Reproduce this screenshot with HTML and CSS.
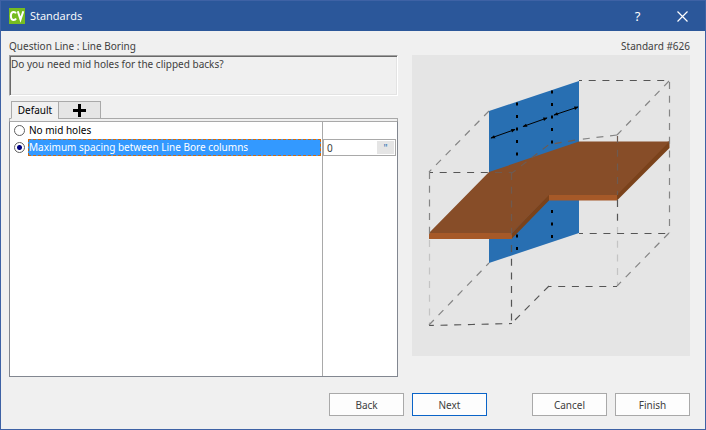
FILE: index.html
```html
<!DOCTYPE html>
<html lang="en">
<head>
<meta charset="utf-8">
<title>Standards</title>
<link rel="stylesheet" href="styles.css">
</head>
<body>
<div class="window">
  <header class="titlebar">
    <svg class="logo" viewBox="0 0 16 16" aria-hidden="true"><rect width="16" height="16" fill="#76bc21"/><path d="M7 5.400C6.400 4.200 5.600 3.900 4.700 3.900C2.900 3.900 1.900 5.300 1.900 8C1.900 10.700 2.900 12 4.700 12C5.700 12 6.500 11.600 7 10.500M8.800 3.300L11.500 11.500L14.300 3.300" fill="none" stroke="#fff" stroke-width="2"/></svg>
    <h1 class="title">Standards</h1>
    <button class="title-button" type="button" aria-label="Help">?</button>
    <button class="title-button" type="button" aria-label="Close"><svg class="close" viewBox="0 0 11 11"><path d="M.5 .5L10.500 10.500M10.500 .5L.5 10.500" stroke="#fff" stroke-width="1.2"/></svg></button>
  </header>
  <main class="content">
    <section class="question">
      <label class="caption" for="question">Question Line : Line Boring</label>
      <textarea class="question-text" id="question" readonly>Do you need mid holes for the clipped backs?</textarea>
      <nav class="tabs">
        <button class="tab active" type="button">Default</button>
        <button class="tab add" type="button" aria-label="Add"><svg class="plus" viewBox="0 0 13 13"><path d="M6.500 0V13M0 6.500H13" stroke="#000" stroke-width="3"/></svg></button>
      </nav>
      <div class="tab-edge"></div>
      <div class="options">
        <div class="choices">
          <div class="row"><input class="radio" type="radio" name="holes" id="none"><label class="choice" for="none">No mid holes</label></div>
          <div class="row"><input class="radio" type="radio" name="holes" id="spacing" checked><label class="choice selected" for="spacing">Maximum spacing between Line Bore columns</label></div>
        </div>
        <div class="values">
          <div class="field">
            <input class="value" type="text" value="0" aria-label="Maximum spacing">
            <button class="unit" type="button">"</button>
          </div>
        </div>
      </div>
    </section>
    <section class="preview">
      <p class="caption right">Standard #626</p>
      <svg class="drawing" viewBox="412 55 278 301" role="img" aria-label="Corner shelf with a drilled back panel">
        <rect x="412" y="55" width="278" height="301" fill="#e5e5e5"/>
        <path d="M489 111L579 81V233L489 263Z" fill="#286fb2"/>
        <path d="M512 233L549 194V200.500L512 238.500ZM616 195L668 141.500H669.500V148L617 200.500Z" fill="#7a421b"/>
        <path d="M489 172L579 141.500H669.500L617 195H549L512 233H429Z" fill="#874d28"/>
        <path d="M429 233H512V239H429ZM549 195H617V200.500H549Z" fill="#a65928"/>
        <g stroke="#000" stroke-width="2" stroke-dasharray="3 9.500">
          <path d="M517 102.500V157M517 234.500V250M552 90.500V144M552 210V238"/>
        </g>
        <g stroke="#000" fill="#000">
          <path d="M491 138L515 129.500M523 126.500L547 118M554 115L578 107"/>
          <path stroke="none" d="M490.500 138.300L494 135.200L495.500 138.300ZM515.500 129.300L511 129L512 132.500ZM522.500 126.700L526 123.700L527.500 126.800ZM547.500 117.800L543 117.500L544 121ZM553.500 115.300L557 112.200L558.500 115.300ZM578.500 106.800L574 106.500L575 110Z"/>
        </g>
        <g class="guides">
          <path class="soft" d="M489 111L429 172"/>
          <path d="M579 80.500H669" stroke-dashoffset="4"/>
          <path class="soft" d="M669.500 82V233"/>
          <path class="soft" d="M669 81L617 135"/>
          <path class="soft" d="M617 135L579 139.500"/>
          <path class="hidden" d="M579 139.500L549 144.500L512 173" stroke-dashoffset="-4"/>
          <path d="M429 172.500H489" stroke-dashoffset="3"/>
          <path class="hidden" d="M489 172.500H512" stroke-dashoffset="-6"/>
          <path class="soft" d="M429.500 172V240"/>
          <path class="faint" d="M429.500 240V325"/>
          <path d="M511.500 240V323" stroke-dashoffset="-5"/>
          <path class="hidden" d="M511.500 173V240M617.500 136V195"/>
          <path d="M617.500 200V225"/>
          <path class="faint" d="M617.500 227V286"/>
          <path d="M579 233.500H669" stroke-dashoffset="3"/>
          <path class="soft" d="M669 233L617 286"/>
          <path d="M617 286.500H549" stroke-dashoffset="3"/>
          <path d="M549 286L512 323"/>
          <path d="M512 323.500L472 324.500L429 325.500" stroke-dashoffset="4"/>
          <path class="soft" d="M429 325L489 263"/>
        </g>
      </svg>
    </section>
  </main>
  <footer class="actions">
    <button class="button" type="button">Back</button>
    <button class="button primary" type="button">Next</button>
    <button class="button cancel" type="button">Cancel</button>
    <button class="button" type="button">Finish</button>
  </footer>
</div>
</body>
</html>
```
FILE: styles.css
```css
* { box-sizing: border-box; }

body { margin: 0; }

body, button, input, textarea {
  font-family: "Noto Sans", "Open Sans", sans-serif;
  font-size: 10px;
  line-height: 16px;
  color: #404040;
}

button, input, textarea { margin: 0; padding: 0; border-radius: 0; }

.window {
  display: flex;
  flex-direction: column;
  min-height: 100vh;
  border: 1px solid #3e62a5;
  background: #f0f0f0;
}

.titlebar {
  display: flex;
  align-items: center;
  height: 30px;
  padding-left: 8px;
  background: #2b579a;
}

.logo { width: 16px; height: 16px; }

.title {
  flex: 1;
  margin: 0 0 0 5px;
  font: 400 11px/16px "Open Sans", sans-serif;
  color: #fff;
}

.title-button {
  width: 45px;
  height: 30px;
  border: 0;
  background: none;
  font-size: 13px;
  color: #fff;
}

.close { display: block; width: 11px; height: 11px; margin: auto; }

.content {
  display: grid;
  grid-template-columns: 389fr 278fr;
  gap: 14px;
  padding: 7px 15px 0 8px;
}

.question { display: flex; flex-direction: column; }

.caption { display: block; margin: 0; height: 17px; }
.right { text-align: right; }

.question-text {
  display: block;
  width: 100%;
  height: 41px;
  padding: 0 1px;
  border: 1px solid;
  border-color: #a0a0a0 #fff #fff #a0a0a0;
  background: #f0f0f0;
  box-shadow: inset 1px 1px #696969, inset -1px -1px #e3e3e3;
  resize: none;
  outline: 0;
}

.tabs { display: flex; margin: 5px 0 -1px 2px; z-index: 1; }

.tab {
  width: 48px;
  height: 18px;
  border: 1px solid #a9a9a9;
  border-bottom-color: #f0f0f0;
  background: #f0f0f0;
  color: #000;
}

.add {
  width: 43px;
  margin-left: -1px;
  border-bottom-color: #a9a9a9;
  background: #e5e5e5;
}

.plus { display: block; width: 13px; height: 13px; margin: auto; }

.tab-edge {
  height: 3px;
  border: 1px solid #a9a9a9;
  border-bottom: 0;
}

.options {
  display: flex;
  flex: 1;
  min-height: 256px;
  border: 1px solid #828790;
  border-top-color: #a9a9a9;
  background: #fff;
}

.choices { flex: 1; padding: 0 1px 0 4px; }

.row { display: flex; align-items: center; height: 17px; }

.radio {
  appearance: none;
  width: 11px;
  height: 11px;
  border: 1px solid #606060;
  border-radius: 50%;
  background: #fff;
}

.radio:checked { background: radial-gradient(circle, #000080 0 2px, #fff 3px); }

.choice {
  flex: 1;
  margin-left: 3px;
  border: 1px solid transparent;
  line-height: 15px;
  color: #000;
}

.selected {
  border: 1px dashed #d06a10;
  background: #3399ff;
  color: #fff;
}

.values {
  width: 75px;
  padding: 17px 1px 0 0;
  border-left: 1px solid #a9a9a9;
}

.field {
  display: flex;
  height: 17px;
  border: 1px solid #a9a9a9;
  background: #fff;
}

.value {
  flex: 1;
  min-width: 0;
  padding-left: 3px;
  border: 0;
  background: none;
}

.unit {
  width: 19px;
  border: 1px solid #fff;
  background: #e5e5e5;
  line-height: 12px;
  color: #286fb2;
}

.preview { display: flex; flex-direction: column; }

.drawing { display: block; width: 100%; }

.guides path {
  fill: none;
  stroke: #555;
  stroke-width: 1.2;
  stroke-dasharray: 7 6.7;
}

.guides .soft { stroke: #858585; }
.guides .hidden { stroke: #6e5a50; }
.guides .faint { stroke: #c4c4c4; }

.actions {
  display: flex;
  justify-content: flex-end;
  gap: 8px;
  padding: 16px 15px 13px;
}

.button {
  width: 75px;
  height: 23px;
  border: 1px solid #a9a9a9;
  background: #fdfdfd;
}

.primary { border-color: #0a64c8; }
.cancel { margin-left: 37px; }
```
